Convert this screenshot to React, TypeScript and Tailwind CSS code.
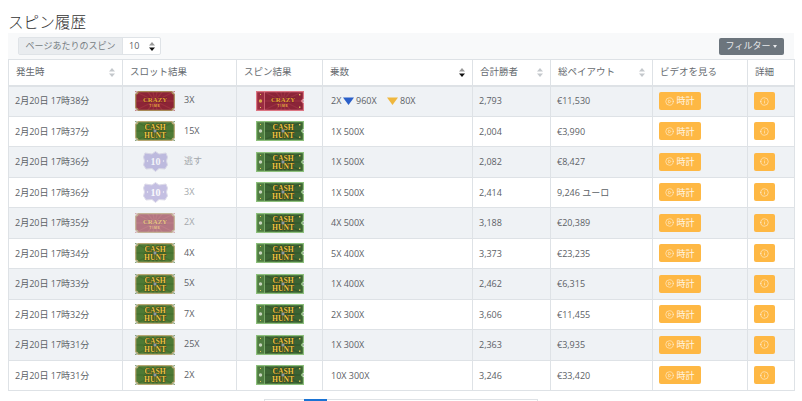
import { CircleAlert, CirclePlay } from 'lucide-react'

type Kind = 'crazy' | 'cash' | 'ten'

const rows: {
  time: string
  slot: Kind
  slotText: string
  faded?: boolean
  spin: Kind
  mult: string
  top?: [string, string]
  winners: string
  payout: string
}[] = [
  { time: '2月20日 17時38分', slot: 'crazy', slotText: '3X', spin: 'crazy', mult: '2X', top: ['960X', '80X'], winners: '2,793', payout: '€11,530' },
  { time: '2月20日 17時37分', slot: 'cash', slotText: '15X', spin: 'cash', mult: '1X 500X', winners: '2,004', payout: '€3,990' },
  { time: '2月20日 17時36分', slot: 'ten', slotText: '逃す', faded: true, spin: 'cash', mult: '1X 500X', winners: '2,082', payout: '€8,427' },
  { time: '2月20日 17時36分', slot: 'ten', slotText: '3X', faded: true, spin: 'cash', mult: '1X 500X', winners: '2,414', payout: '9,246 ユーロ' },
  { time: '2月20日 17時35分', slot: 'crazy', slotText: '2X', faded: true, spin: 'cash', mult: '4X 500X', winners: '3,188', payout: '€20,389' },
  { time: '2月20日 17時34分', slot: 'cash', slotText: '4X', spin: 'cash', mult: '5X 400X', winners: '3,373', payout: '€23,235' },
  { time: '2月20日 17時33分', slot: 'cash', slotText: '5X', spin: 'cash', mult: '1X 400X', winners: '2,462', payout: '€6,315' },
  { time: '2月20日 17時32分', slot: 'cash', slotText: '7X', spin: 'cash', mult: '2X 300X', winners: '3,606', payout: '€11,455' },
  { time: '2月20日 17時31分', slot: 'cash', slotText: '25X', spin: 'cash', mult: '1X 300X', winners: '2,363', payout: '€3,935' },
  { time: '2月20日 17時31分', slot: 'cash', slotText: '2X', spin: 'cash', mult: '10X 300X', winners: '3,246', payout: '€33,420' },
]

const headers = [
  { label: '発生時', sort: 'idle', w: 'w-[114px]' },
  { label: 'スロット結果', w: 'w-[114px]' },
  { label: 'スピン結果', w: 'w-[86px]' },
  { label: '乗数', sort: 'active', w: 'w-[150px]' },
  { label: '合計勝者', sort: 'idle', w: 'w-[78px]' },
  { label: '総ペイアウト', sort: 'idle', w: 'w-[102px]' },
  { label: 'ビデオを見る', w: 'w-[95px]' },
  { label: '詳細', w: 'w-[47px]' },
]

function SortIcon({ active }: { active?: boolean }) {
  return (
    <svg width="6" height="9" viewBox="0 0 6 9" className="shrink-0">
      <path d="M3 0 6 3.6H0Z" fill={active ? '#9a9a9a' : '#c4c8cc'} />
      <path d="M3 9 6 5.4H0Z" fill={active ? '#111' : '#c4c8cc'} />
    </svg>
  )
}

function Rays({ cx, cy, color }: { cx: number; cy: number; color: string }) {
  const angles = Array.from({ length: 14 }, (_, i) => (i * Math.PI) / 7)
  return (
    <g stroke={color} strokeWidth="1.3" opacity="0.6">
      {angles.map((a) => (
        <line key={a} x1={cx} y1={cy} x2={cx + Math.cos(a) * 32} y2={cy + Math.sin(a) * 32} />
      ))}
    </g>
  )
}

function Label({ kind, cx }: { kind: Kind; cx: number }) {
  if (kind === 'crazy') {
    return (
      <>
        <text x={cx} y="11" textAnchor="middle" fontSize="6.8" fontWeight="700" fontFamily="Liberation Serif, serif" fill="#eaa83a" stroke="#5a1420" strokeWidth="0.5" paintOrder="stroke">
          CRAZY
        </text>
        <text x={cx} y="16" textAnchor="middle" fontSize="3.4" fontWeight="700" fontFamily="Liberation Sans, sans-serif" fill="#e0a53c" letterSpacing="0.8">
          TIME
        </text>
      </>
    )
  }
  const textProps = {
    x: cx,
    textAnchor: 'middle' as const,
    fontSize: 7.6,
    fontWeight: 700,
    fontFamily: 'Liberation Serif, serif',
    fill: '#ecc443',
    stroke: '#2f3312',
    strokeWidth: 0.7,
    paintOrder: 'stroke',
  }
  return (
    <>
      <text {...textProps} y="8.6">
        CASH
      </text>
      <text {...textProps} y="16.6">
        HUNT
      </text>
      <circle cx={cx} cy="10" r="1.8" fill="#8a9aa0" stroke="#3a4a3a" strokeWidth="0.4" />
    </>
  )
}

// 結果バッジ
function SlotBadge({ kind }: { kind: Kind }) {
  if (kind === 'ten') {
    return (
      <svg width="25" height="21" viewBox="0 0 25 21" className="mx-auto block">
        <path
          d="M12.5 .5 16 3 23 2 24.5 6 23.5 10 24.5 14 22 18 16 17.5 12.5 20.5 9 17.5 3 18 .5 14 1.5 10 .5 6 2 2 9 3Z"
          fill="#9d96cf"
          stroke="#c9c5dc"
          strokeWidth="1"
        />
        <text x="12.5" y="13.6" textAnchor="middle" fontSize="10" fontWeight="700" fontFamily="Liberation Serif, serif" fill="#f8f6fd">
          10
        </text>
        <circle cx="4.5" cy="10" r=".7" fill="#f0eef8" />
        <circle cx="20.5" cy="10" r=".7" fill="#f0eef8" />
      </svg>
    )
  }
  const crazy = kind === 'crazy'
  const outline = 'M3 .7H37Q37 3 39.3 3V17Q37 17 37 19.3H3Q3 17 .7 17V3Q3 3 3 .7Z'
  return (
    <svg width="40" height="20" viewBox="0 0 40 20" className="block">
      <path d={outline} fill={crazy ? '#8c2436' : '#4e7a35'} />
      <Rays cx={20} cy={10} color={crazy ? '#a63a44' : '#3f6a2c'} />
      <path d={outline} fill="none" stroke={crazy ? '#a98a58' : '#b7a873'} strokeWidth="1.2" />
      <Label kind={kind} cx={20} />
    </svg>
  )
}

function Ticket({ kind }: { kind: Kind }) {
  const crazy = kind === 'crazy'
  const edge = crazy ? '#dc7582' : '#8dc07c'
  const outline = 'M.6 .6H47.4V7.5L45.4 10 47.4 12.5V19.4H.6Z'
  return (
    <svg width="48" height="20" viewBox="0 0 48 20" className="block">
      <path d={outline} fill={crazy ? '#8b2438' : '#3c6433'} />
      <Rays cx={27} cy={10} color={crazy ? '#a3384a' : '#2f5228'} />
      <path d="M.6 .6H8.5V19.4H.6Z" fill={crazy ? '#9a2c40' : '#4f7c40'} />
      <path d={outline} fill="none" stroke={edge} strokeWidth="1.2" />
      <line x1="8.5" y1="1" x2="8.5" y2="19" stroke={edge} strokeWidth="0.7" />
      <circle cx="4.5" cy="10" r="1.7" fill={crazy ? '#d9a94a' : '#c9d6c0'} />
      <rect x="4" y="3" width="1" height="1" fill="#e0c35a" />
      <rect x="4" y="16" width="1" height="1" fill="#e0c35a" />
      <rect x="43" y="15.5" width="1.4" height="1.4" fill="#e0c35a" />
      <rect x="43" y="3" width="1.4" height="1.4" fill="#e0c35a" />
      <Label kind={kind} cx={27} />
    </svg>
  )
}

function Triangle({ color }: { color: string }) {
  return (
    <svg width="11" height="8" viewBox="0 0 11 8" className="shrink-0">
      <path d="M0 .5H11L5.5 8Z" fill={color} />
    </svg>
  )
}

export default function App() {
  return (
    <div className="h-[401px] overflow-hidden bg-white px-2 font-['Open_Sans','Noto_Sans_CJK_JP',sans-serif] text-[9px] text-[#5c6166]">
      <h1 className="h-[33px] pt-[11px] text-[15.6px] leading-[22px] font-light text-[#333]">スピン履歴</h1>

      <div className="flex h-[26px] w-[786px] items-center justify-between bg-[#f8f9fa] pr-[10px] pl-[10px]">
        <div className="flex h-[18px] items-stretch rounded-[2px] border border-[#dfe3e7] bg-white">
          <span className="flex w-[103px] items-center justify-center bg-[#e9ecef] text-[#767c82]">ページあたりのスピン</span>
          <span className="flex w-[38px] items-center gap-[10px] border-l border-[#dfe3e7] pl-[6px]">
            10
            <SortIcon active />
          </span>
        </div>
        <button className="flex h-[17px] w-[65px] items-center justify-center gap-[3px] rounded-[2px] bg-[#6c757d] text-[#e8eaec]">
          フィルター
          <span className="mt-[1px] border-x-[2.5px] border-t-[3px] border-x-transparent border-t-[#e8eaec]" />
        </button>
      </div>

      <table className="w-[786px] table-fixed border-collapse">
        <thead>
          <tr className="h-[26px]">
            {headers.map((h) => (
              <th key={h.label} className={`${h.w} border border-b-2 border-[#dee2e6] px-[7px] text-left text-[9.5px] font-normal text-[#666b70]`}>
                <span className="flex items-center justify-between">
                  {h.label}
                  {h.sort && <SortIcon active={h.sort === 'active'} />}
                </span>
              </th>
            ))}
          </tr>
        </thead>
        <tbody>
          {rows.map((r, i) => (
            <tr key={i} className="h-[30.5px] odd:bg-[#eff2f5]">
              <td className="border border-[#dee2e6] pl-[6px]">{r.time}</td>
              <td className="border border-[#dee2e6] pl-[12px]">
                <div className={`flex items-center gap-[9px] ${r.faded ? 'text-[#a4a8ac]' : ''}`}>
                  <div className={`w-[40px] ${r.faded ? 'opacity-60' : ''}`}>
                    <SlotBadge kind={r.slot} />
                  </div>
                  <span className="-mt-[2px]">{r.slotText}</span>
                </div>
              </td>
              <td className="border border-[#dee2e6] pl-[19px]">
                <Ticket kind={r.spin} />
              </td>
              <td className="border border-[#dee2e6] pl-[8px]">
                {r.top ? (
                  <div className="flex items-center">
                    <span className="mr-[1px] w-[11px]">{r.mult}</span>
                    <Triangle color="#2a5fc9" />
                    <span className="ml-[2px] w-[31px]">{r.top[0]}</span>
                    <Triangle color="#efb73e" />
                    <span className="ml-[2px]">{r.top[1]}</span>
                  </div>
                ) : (
                  r.mult
                )}
              </td>
              <td className="border border-[#dee2e6] pl-[6px]">{r.winners}</td>
              <td className="border border-[#dee2e6] pl-[6px]">{r.payout}</td>
              <td className="border border-[#dee2e6] pl-[6px]">
                <button className="flex h-[18px] w-[42px] items-center justify-center gap-[2px] rounded-[2px] bg-[#feb844] text-[#fff6e6]">
                  <CirclePlay size={9} strokeWidth={1.5} />
                  時計
                </button>
              </td>
              <td className="border border-[#dee2e6] pl-[6px]">
                <button className="flex h-[18px] w-[21px] items-center justify-center rounded-[2px] bg-[#feb844] text-[#fff6e6]">
                  <CircleAlert size={9} strokeWidth={1.5} className="rotate-180" />
                </button>
              </td>
            </tr>
          ))}
        </tbody>
      </table>

      <div className="mx-auto mt-[8px] flex h-[4px] w-[274px] border border-[#dee2e6] pl-[39px]">
        <span className="-mt-px h-[4px] w-[23px] bg-[#1a73d4]" />
      </div>
    </div>
  )
}
